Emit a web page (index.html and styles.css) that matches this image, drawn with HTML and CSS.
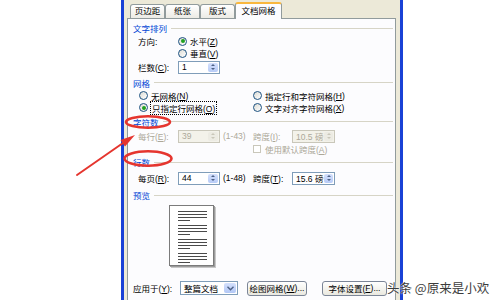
FILE: index.html
```html
<!DOCTYPE html>
<html lang="zh-CN">
<head>
  <meta charset="UTF-8" />
  <title>页面设置 – 文档网格</title>
  <link rel="stylesheet" href="styles.css">
</head>
<body>
  <div class="window">
    <!-- 选项卡 -->
    <div class="tabs">
      <div class="tab">页边距</div>
      <div class="tab">纸张</div>
      <div class="tab">版式</div>
      <div class="tab active">文档网格</div>
    </div>

    <div class="panel">
      <div class="title">文字排列</div>
      <div class="row">
        <span class="lbl">方向:</span>
        <span class="radio on"></span><span>水平(<u>Z</u>)</span>
      </div>
      <div class="row">
        <span class="lbl"></span>
        <span class="radio"></span><span>垂直(<u>V</u>)</span>
      </div>
      <div class="row">
        <span class="lbl">栏数(<u>C</u>):</span>
        <span class="field w42"><span class="val">1</span><span class="spin"></span></span>
      </div>

      <div class="title">网格</div>
      <div class="row opts">
        <span class="opt"><span class="radio"></span>无网格(<u>N</u>)</span>
        <span class="opt"><span class="radio"></span>指定行和字符网格(<u>H</u>)</span>
      </div>
      <div class="row opts">
        <span class="opt"><span class="radio on"></span><span class="focus">只指定行网格(<u>O</u>)</span></span>
        <span class="opt"><span class="radio"></span>文字对齐字符网格(<u>X</u>)</span>
      </div>

      <div class="title">字符数</div>
      <div class="row off">
        <span class="lbl">每行(<u>E</u>):</span>
        <span class="field w42 dis"><span class="val">39</span><span class="spin"></span></span>
        <span class="range">(1-43)</span>
        <span class="lbl2">跨度(<u>I</u>):</span>
        <span class="field w43 dis"><span class="val">10.5 磅</span><span class="spin"></span></span>
      </div>
      <div class="row off check-row">
        <span class="check"></span><span>使用默认跨度(<u>A</u>)</span>
      </div>

      <div class="title">行数</div>
      <div class="row">
        <span class="lbl">每页(<u>R</u>):</span>
        <span class="field w42"><span class="val">44</span><span class="spin"></span></span>
        <span class="range">(1-48)</span>
        <span class="lbl2">跨度(<u>T</u>):</span>
        <span class="field w43"><span class="val">15.6 磅</span><span class="spin"></span></span>
      </div>

      <div class="title">预览</div>
      <div class="preview">
        <div class="page">
          <div class="para"><i></i><i></i><i></i><i class="short"></i></div>
          <div class="para"><i></i><i></i><i></i><i class="short"></i></div>
          <div class="para"><i></i><i></i><i></i><i class="short"></i></div>
          <div class="para"><i></i><i></i><i></i><i class="short"></i></div>
        </div>
      </div>

      <div class="row bottom">
        <span class="lbl3">应用于(<u>Y</u>):</span>
        <span class="combo"><span class="val">整篇文档</span>
          <span class="drop"><svg width="7" height="5" viewBox="0 0 7 5"><path d="M0.5 0.8 L3.5 3.8 L6.5 0.8" fill="none" stroke="#4d6185" stroke-width="1.4"/></svg></span>
        </span>
        <span class="btn b1">绘图网格(<u>W</u>)...</span>
        <span class="btn b2">字体设置(<u>F</u>)...</span>
      </div>
    </div>
  </div>

  <!-- 标注:红圈和箭头 -->
  <svg class="marks" width="500" height="300" viewBox="0 0 500 300">
    <ellipse cx="148" cy="122" rx="22" ry="5.8" fill="none" stroke="#e5352e" stroke-width="2.6"/>
    <ellipse cx="148" cy="158.5" rx="23.5" ry="7.2" fill="none" stroke="#e5352e" stroke-width="2.6"/>
    <path d="M77 175 L123 143" stroke="#e5352e" stroke-width="2" stroke-linecap="round"/>
    <polygon points="135,135 125,146.5 120.5,140" fill="#e5352e"/>
  </svg>

  <div class="watermark">头条 @原来是小欢</div>
</body>
</html>
```

FILE: styles.css
```css
*{box-sizing:border-box}
html,body{margin:0;height:300px;overflow:hidden;background:#fff}
body{position:relative;font-family:"Liberation Sans","Noto Sans CJK SC",sans-serif;font-size:8.5px;color:#000}
u{text-decoration:underline}

.window{margin-left:121px;width:282px;height:300px;background:#ece9d8;border-left:3px solid #1941d6;border-right:3px solid #1941d6;padding:0 4px 0 3px}

.tabs{display:flex;align-items:flex-end;height:18px;padding-left:3px}
.tab{width:35px;height:14px;line-height:13px;text-align:center;border:1px solid #919b9c;border-bottom:0;border-radius:3px 3px 0 0;background:linear-gradient(#fff,#ecebe5)}
.tab.active{position:relative;z-index:1;width:47px;height:17px;line-height:15px;margin-bottom:-1px;background:#fcfcfe;border-top:2px solid #f9b73d}

.panel{height:282px;border:1px solid #919b9c;border-bottom:0;background:#fcfcfe;padding:3px 0 0 5px;display:grid;grid-template-rows:12px 14px 10px 18px 13px 13px 11px 17px 12px 14px 12px 20px 14px 78px 16px}

.title{display:flex;align-items:center;color:#0046d5}
.title::after{content:"";flex:1;height:1px;background:#d6d4c6;margin:0 2px 0 4px}

.row{display:flex;align-items:center;padding-left:5px;white-space:nowrap}
.lbl{width:40px}
.lbl2{width:39px}
.range{width:30px;margin-left:3px}
.off{color:#aca899}

.radio{position:relative;width:9px;height:9px;margin-right:3px;border:1px solid #1c5180;border-radius:50%;background:linear-gradient(135deg,#dcdcd5,#fff)}
.radio.on::after{content:"";position:absolute;left:1.5px;top:1.5px;width:4px;height:4px;border-radius:50%;background:#21a121}

.opts{padding-left:6px}
.opt{display:flex;align-items:center;width:114px}
.focus{outline:1px dotted #000;outline-offset:0;padding:0 1px}

.field{display:flex;align-items:center;height:13px;border:1px solid #7f9db9;background:#fff;padding-left:3px}
.field .val{flex:1}
.w42{width:42px}
.w43{width:43px}
.spin{position:relative;align-self:stretch;width:10px;margin:1px;background:linear-gradient(#d4e0fc,#b7cbf7);border-radius:2px}
.spin::before,.spin::after{content:"";position:absolute;left:2.5px;border-left:2.5px solid transparent;border-right:2.5px solid transparent}
.spin::before{top:1.5px;border-bottom:2.5px solid #4d6185}
.spin::after{bottom:1.5px;border-top:2.5px solid #4d6185}
.field.dis{border-color:#c9c7ba;background:#f3f2ea}
.field.dis .spin{background:#ecebe3}
.field.dis .spin::before{border-bottom-color:#c9c7ba}
.field.dis .spin::after{border-top-color:#c9c7ba}

.check-row{padding-left:120px}
.check{width:8px;height:8px;margin-right:4px;border:1px solid #c9c7ba;background:#fff}

.preview{padding:3px 0 0 36px}
.page{display:flex;flex-direction:column;gap:4px;width:45px;height:61px;padding:5px 6px 0 8px;border:1px solid #7b7b7b;background:#fff;box-shadow:1px 1px 0 #9c9c9c,2px 2px 0 #c8c8c8}
.para{display:flex;flex-direction:column;gap:2px}
.para i{display:block;height:1px;background:#4a4a4a}
.para i.short{width:12px}

.bottom{padding-left:0}
.lbl3{width:47px}
.combo{display:flex;align-items:center;width:58px;height:14px;border:1px solid #7f9db9;background:#fff;padding-left:3px}
.combo .val{flex:1}
.drop{display:flex;align-items:center;justify-content:center;align-self:stretch;width:12px;margin:1px;border-radius:2px;background:linear-gradient(#d4e0fc,#b2c7f6)}
.btn{display:flex;align-items:center;justify-content:center;height:15px;border:1px solid #7b8597;border-radius:3px;background:linear-gradient(#fff,#e9e8df)}
.b1{width:60px;margin-left:9px}
.b2{width:65px;margin-left:15px}

.marks{position:absolute;left:0;top:0;pointer-events:none}
.watermark{position:absolute;left:387px;top:278px;font-family:"Noto Sans CJK SC",sans-serif;font-size:12.5px;color:#3c3c3c;text-shadow:0 0 2px #fff,0 0 1px #fff}
```
